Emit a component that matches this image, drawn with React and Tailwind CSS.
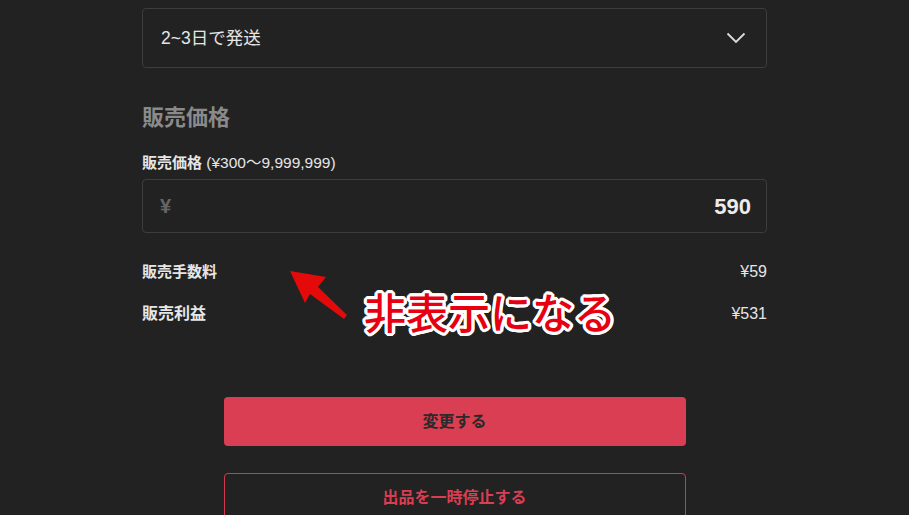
import React from "react";

export default function App() {
  return (
    <div
      className="relative w-[909px] h-[515px] overflow-hidden bg-[#222222] text-[#e6e6e6]"
      style={{ fontFamily: '"Liberation Sans", "Noto Sans CJK JP", sans-serif' }}
    >
      <div className="w-[625px] mx-auto pt-[8px] flex flex-col">
        <div className="h-[60px] border border-[#3d3d3d] rounded-[4px] flex items-center justify-between pl-[18px] pr-[20px]">
          <span className="text-[17.5px]">2~3日で発送</span>
          <svg width="20" height="12" viewBox="0 0 20 12" fill="none">
            <polyline points="1.5,1.5 10,10 18.5,1.5" stroke="#dcdcdc" strokeWidth="1.8" />
          </svg>
        </div>

        <h2 className="mt-[36px] h-[28px] leading-[28px] text-[22px] font-bold text-[#8a8a8a]">販売価格</h2>

        <div className="mt-[21px] h-[20px] leading-[20px] text-[15px]">
          <span className="font-bold">販売価格</span>
          <span className="text-[15.5px]"> (¥300〜9,999,999)</span>
        </div>

        <div className="mt-[6px] h-[54px] border border-[#3d3d3d] rounded-[4px] flex items-center justify-between pl-[17px] pr-[15px]">
          <span className="text-[20px] font-bold text-[#666666]">¥</span>
          <span className="text-[22px] font-bold text-[#ececec]">590</span>
        </div>

        <div className="mt-[29px] h-[20px] leading-[20px] flex justify-between text-[15px]">
          <span className="font-bold">販売手数料</span>
          <span className="text-[16px]">¥59</span>
        </div>
        <div className="mt-[22px] h-[20px] leading-[20px] flex justify-between text-[15px]">
          <span className="font-bold text-[16px]">販売利益</span>
          <span className="text-[16px]">¥531</span>
        </div>

        <div className="mt-[73px] w-[462px] mx-auto flex flex-col">
          <button className="h-[49px] rounded-[4px] bg-[#d93e52] text-[#2a2a2a] text-[16px] font-bold">
            変更する
          </button>
          <button className="mt-[27px] h-[49px] rounded-[4px] border border-[#d03a4c] text-[#d93e52] text-[16px] font-bold">
            出品を一時停止する
          </button>
        </div>
      </div>

      <svg className="absolute left-0 top-0 pointer-events-none" width="909" height="515" viewBox="0 0 909 515">
        <polygon
          points="290,271 326,277 318,287 347,315 344,319 310,294 305,303"
          fill="#e50a0a"
        />
      </svg>

      <div
        className="absolute left-[364px] top-[286px] text-[42px] leading-[50px] font-medium text-[#e60012]"
        style={{
          fontFamily: '"Noto Sans CJK JP", sans-serif',
          textShadow:
            "3px 0 0 #fff, -3px 0 0 #fff, 0 3px 0 #fff, 0 -3px 0 #fff, 2px 2px 0 #fff, -2px 2px 0 #fff, 2px -2px 0 #fff, -2px -2px 0 #fff, 3px 1px 0 #fff, -3px 1px 0 #fff, 3px -1px 0 #fff, -3px -1px 0 #fff, 1px 3px 0 #fff, -1px 3px 0 #fff, 1px -3px 0 #fff, -1px -3px 0 #fff",
        }}
      >
        非表示になる
      </div>
    </div>
  );
}
